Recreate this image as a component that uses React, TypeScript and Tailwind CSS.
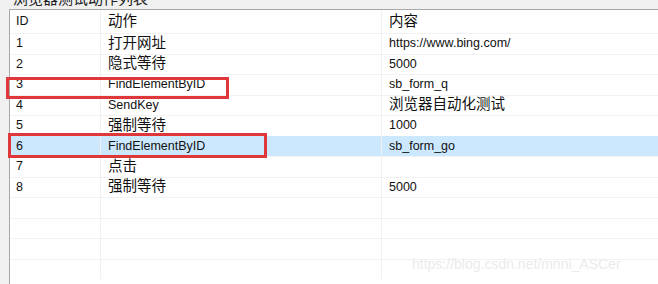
import React from "react";

const rows: { id: string; action: string; content: string; sel?: boolean }[] = [
  { id: "1", action: "打开网址", content: "https://www.bing.com/" },
  { id: "2", action: "隐式等待", content: "5000" },
  { id: "3", action: "FindElementByID", content: "sb_form_q" },
  { id: "4", action: "SendKey", content: "浏览器自动化测试" },
  { id: "5", action: "强制等待", content: "1000" },
  { id: "6", action: "FindElementByID", content: "sb_form_go", sel: true },
  { id: "7", action: "点击", content: "" },
  { id: "8", action: "强制等待", content: "5000" },
  { id: "", action: "", content: "" },
  { id: "", action: "", content: "" },
  { id: "", action: "", content: "" },
  { id: "", action: "", content: "" },
];

const font = { fontFamily: '"Liberation Sans", "Noto Sans CJK SC", sans-serif' };

function Cell({ text, w, first }: { text: string; w: string; first?: boolean }) {
  const cjk = /[\u4e00-\u9fff]/.test(text);
  return (
    <div
      className={`${w} shrink-0 h-full flex items-center ${first ? "pl-[6px]" : "pl-[7px] border-l border-[#f0f0f0]"} ${cjk ? "text-[14.5px]" : "text-[12.5px]"} text-[#111] whitespace-nowrap overflow-hidden`}
    >
      {text}
    </div>
  );
}

export default function App() {
  return (
    <div className="relative w-[658px] h-[284px] bg-[#f0f0f0] overflow-hidden" style={font}>
      <div className="h-[9px] pl-[14px] relative overflow-hidden">
        <div className="absolute left-[13px] top-[-10px] text-[15px] leading-[18px] text-[#222]">浏览器测试动作列表</div>
      </div>
      <div className="ml-[9px] h-[275px] bg-white border-t border-l border-[#a8a8a8] flex flex-col">
        <div className="h-[23px] flex shrink-0">
          <Cell text="ID" w="w-[90px]" first />
          <Cell text="动作" w="w-[281px]" />
          <Cell text="内容" w="flex-1" />
        </div>
        {rows.map((r, i) => (
          <div
            key={i}
            className={`h-[20.5px] flex shrink-0 border-t ${r.sel ? "bg-[#cce8ff] border-[#cce8ff]" : "border-[#f2f2f2]"}`}
          >
            <Cell text={r.id} w="w-[90px]" first />
            <Cell text={r.action} w="w-[281px]" />
            <Cell text={r.content} w="flex-1" />
          </div>
        ))}
      </div>
      <div className="absolute left-[6px] top-[77px] w-[223px] h-[22px] border-[3px] border-[#e0383a]" />
      <div className="absolute left-[8px] top-[133px] w-[259px] h-[25px] border-[3px] border-[#e0383a]" />
      <div className="absolute left-[412px] top-[254px] text-[14px] text-[#ebebeb] whitespace-nowrap">
        https://blog.csdn.net/mnni_ASCer
      </div>
    </div>
  );
}
